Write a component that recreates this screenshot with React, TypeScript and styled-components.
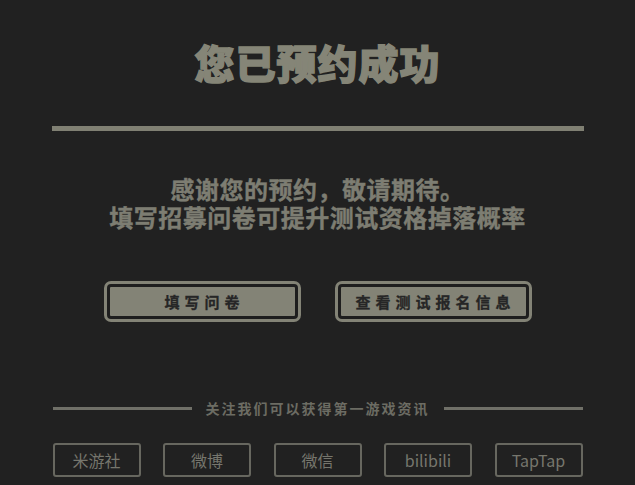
import styled, { createGlobalStyle } from "styled-components";

const GlobalStyle = createGlobalStyle`
  html, body {
    margin: 0;
    padding: 0;
    background: #212121;
  }
  body {
    font-family: "Noto Sans CJK SC", "Noto Sans", sans-serif;
  }
`;

const Page = styled.div`
  width: 635px;
  height: 485px;
  box-sizing: border-box;
  padding-top: 38px;
  display: flex;
  flex-direction: column;
  align-items: center;
  background: #212121;
  overflow: hidden;
`;

const Title = styled.h1`
  margin: 0;
  font-size: 40px;
  line-height: 48px;
  font-weight: 900;
  color: #858577;
  letter-spacing: 1px;
  -webkit-text-stroke: 1.4px #858577;
`;

const Divider = styled.div`
  margin-top: 40px;
  width: 532px;
  height: 5px;
  background: #808073;
`;

const Message = styled.p`
  margin: 44px 0 0;
  font-size: 24px;
  line-height: 28px;
  font-weight: 700;
  letter-spacing: 0.5px;
  color: #7d7d72;
  text-align: center;
  -webkit-text-stroke: 0.4px #7d7d72;
`;

const Actions = styled.div`
  margin-top: 50px;
  display: flex;
  gap: 34px;
`;

const ActionButton = styled.button`
  width: 197px;
  height: 41px;
  padding: 3px;
  box-sizing: border-box;
  border: none;
  border-radius: 7px;
  background: #838376;
  cursor: pointer;
`;

const ActionInner = styled.span`
  display: flex;
  align-items: center;
  justify-content: center;
  height: 100%;
  box-sizing: border-box;
  border: 3px solid #1e1e1e;
  border-radius: 4px;
  font-family: "Noto Sans CJK SC", sans-serif;
  font-size: 15px;
  font-weight: 700;
  letter-spacing: 5px;
  padding-left: 5px;
  color: #262626;
  -webkit-text-stroke: 0.3px #262626;
`;

const Follow = styled.div`
  margin-top: 76px;
  width: 530px;
  display: flex;
  align-items: center;
  gap: 14px;
`;

const FollowLine = styled.div`
  flex: 1;
  height: 3px;
  background: #707068;
`;

const FollowText = styled.span`
  font-size: 14px;
  line-height: 20px;
  font-weight: 700;
  letter-spacing: 2px;
  color: #6c6c63;
`;

const Socials = styled.div`
  margin-top: 25px;
  width: 530px;
  display: flex;
  justify-content: space-between;
`;

const SocialLink = styled.a`
  width: 88px;
  height: 34px;
  box-sizing: border-box;
  border: 2px solid #67675f;
  border-radius: 3px;
  display: flex;
  align-items: center;
  justify-content: center;
  font-size: 16px;
  color: #76766d;
  text-decoration: none;
`;

const socials = ["米游社", "微博", "微信", "bilibili", "TapTap"];

export default function App() {
  return (
    <>
      <GlobalStyle />
      <Page>
        <Title>您已预约成功</Title>
        <Divider />
        <Message>
          感谢您的预约，敬请期待。
          <br />
          填写招募问卷可提升测试资格掉落概率
        </Message>
        <Actions>
          <ActionButton>
            <ActionInner>填写问卷</ActionInner>
          </ActionButton>
          <ActionButton>
            <ActionInner>查看测试报名信息</ActionInner>
          </ActionButton>
        </Actions>
        <Follow>
          <FollowLine />
          <FollowText>关注我们可以获得第一游戏资讯</FollowText>
          <FollowLine />
        </Follow>
        <Socials>
          {socials.map((s) => (
            <SocialLink key={s} href="#">
              {s}
            </SocialLink>
          ))}
        </Socials>
      </Page>
    </>
  );
}
